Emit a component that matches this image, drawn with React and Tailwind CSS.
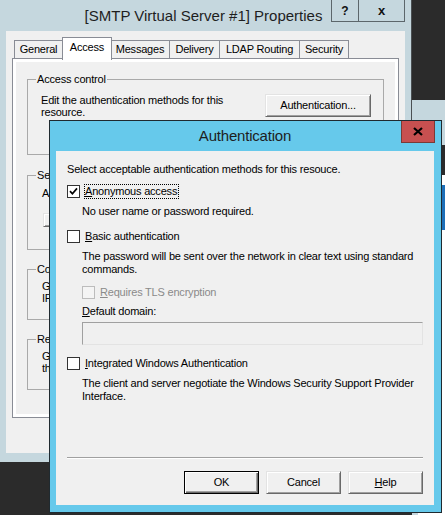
import React from 'react';

const ui = { fontFamily: '"Liberation Sans", Arial, sans-serif' };

const CheckBox = ({ checked, disabled }) => (
  <span
    className={
      disabled
        ? 'flex h-[13px] w-[13px] shrink-0 items-center justify-center border border-[#bcbcbc] bg-[#f4f4f4]'
        : 'flex h-[13px] w-[13px] shrink-0 items-center justify-center border border-[#333333] bg-white'
    }
  >
    {checked ? (
      <svg width="9" height="9" viewBox="0 0 9 9">
        <path d="M1 4.2 L3.4 6.8 L8 1.4" stroke="#000" strokeWidth="1.7" fill="none" />
      </svg>
    ) : null}
  </span>
);

const WinButton = ({ children, isDefault, className = '' }) => (
  <button
    className={
      (isDefault
        ? 'border border-black shadow-[inset_1px_1px_#ffffff,inset_-1px_-1px_#696969,inset_-2px_-2px_#a0a0a0] '
        : 'border border-t-[#e3e3e3] border-l-[#e3e3e3] border-r-[#696969] border-b-[#696969] shadow-[inset_1px_1px_#ffffff,inset_-1px_-1px_#a0a0a0] ') +
      'flex items-center justify-center bg-[#f0f0f0] text-[11px] tracking-[-0.2px] text-black ' +
      className
    }
  >
    {children}
  </button>
);

const tabs = [
  { name: 'General', w: 'w-[49px]' },
  { name: 'Access', w: 'w-[50px]', active: true },
  { name: 'Messages', w: 'w-[60px]' },
  { name: 'Delivery', w: 'w-[51px]' },
  { name: 'LDAP Routing', w: 'w-[81px]' },
  { name: 'Security', w: 'w-[50px]' },
];

const GroupBox = ({ title, className = '', children }) => (
  <fieldset className={'border border-[#a9a9a9] ' + className}>
    <legend className="ml-[8px] px-[1px] text-[11px] leading-[13px]">{title}</legend>
    {children}
  </fieldset>
);

const Key = ({ children }) => <span className="underline underline-offset-1">{children}</span>;

const PropertiesWindow = () => (
  <div className="absolute left-0 top-0 flex h-[462px] w-[412px] flex-col border-r border-[#4a4f52] bg-[#c5d7de]">
    <div className="flex h-[31px] shrink-0 items-start">
      <div className="flex-1 pl-[76px] pt-[6px] text-center text-[15px] leading-[20px] text-[#1e1e1e]">
        [SMTP Virtual Server #1] Properties
      </div>
      <div className="mr-[6px] flex h-[22px] border-x border-b border-[#5c666b]">
        <div className="flex w-[26px] items-center justify-center text-[12px] font-bold text-[#111]">?</div>
        <div className="flex w-[46px] items-center justify-center border-l border-[#5c666b] text-[13px] font-bold text-[#111]">
          x
        </div>
      </div>
    </div>
    <div className="mx-[6px] flex flex-1 flex-col bg-[#f0f0f0] pt-[6px] text-[11px] tracking-[-0.2px] text-black">
      <div className="ml-[8px] flex h-[21px] items-end">
        {tabs.map((t) =>
          t.active ? (
            <div
              key={t.name}
              className={
                t.w +
                ' relative z-10 -mx-px -mb-[2px] flex h-[23px] items-start justify-center border-x border-t border-[#898c95] bg-white pt-[3px] leading-[13px]'
              }
            >
              {t.name}
            </div>
          ) : (
            <div
              key={t.name}
              className={
                t.w +
                ' -ml-px flex h-[18px] items-start justify-center border-x border-t border-[#898c95] bg-[#f0f0f0] pt-[2px] leading-[13px] first:ml-0'
              }
            >
              {t.name}
            </div>
          )
        )}
      </div>
      <div className="mx-[6px] h-[360px] border border-[#898c95] bg-white p-[3px]">
        <div className="flex h-full flex-col bg-[#f0f0f0] px-[11px] pt-[11px]">
          <GroupBox title="Access control" className="h-[82px] w-[357px]">
            <div className="flex items-start pl-[13px] pt-[8px]">
              <div className="w-[224px] leading-[12px]">
                Edit the authentication methods for this resource.
              </div>
              <WinButton className="h-[23px] w-[106px]">Authentication...</WinButton>
            </div>
          </GroupBox>
          <GroupBox title="Secure communication" className="mt-[14px] h-[81px] w-[357px]">
            <div className="pl-[14px] pt-[5px] leading-[12px]">A certificate is not installed on this virtual server.</div>
            <WinButton className="ml-[15px] mt-[14px] h-[14px] w-[90px]">Certificate...</WinButton>
          </GroupBox>
          <GroupBox title="Connection control" className="mt-[13px] h-[57px] w-[357px]">
            <div className="pl-[14px] pt-[4px] leading-[12px]">
              Grant or deny access to this resouce using
              <br />
              IP addresses or Internet domain names.
            </div>
          </GroupBox>
          <GroupBox title="Relay restrictions" className="mt-[13px] h-[57px] w-[357px]">
            <div className="pl-[14px] pt-[4px] leading-[12px]">
              Grant or deny permissions to relay e-mail
              <br />
              through this SMTP virtual server.
            </div>
          </GroupBox>
        </div>
      </div>
    </div>
    <div className="h-[9px] shrink-0" />
  </div>
);

const BackWindow = () => (
  <div className="absolute left-[412px] top-[100px] flex h-[415px] w-[40px] flex-col bg-[#c5d7de]">
    <div className="h-[45px]" />
    <div className="mx-[6px] flex flex-1 flex-col bg-white">
      <div className="h-[30px] bg-[#2b2b2b]" />
      <div className="mt-[10px] h-[45px] bg-[#1c6fb8]" />
    </div>
  </div>
);

const AuthDialog = () => (
  <div className="absolute left-[49px] top-[120px] z-20 flex h-[393px] w-[393px] flex-col border border-[#1f2a30] bg-[#66c9eb] pb-[7px] pl-[6px] pr-[7px]">
    <div className="relative flex h-[30px] shrink-0 items-start justify-center">
      <div className="pt-[6px] text-[15px] leading-[18px] tracking-[-0.2px] text-[#1e1e1e]">Authentication</div>
      <div className="absolute right-[-1px] top-0 flex h-[22px] w-[34px] items-center justify-center border-x border-b border-[#7a3a36] bg-[#c75050]">
        <svg width="10" height="9" viewBox="0 0 10 9">
          <path d="M1 1 L9 8 M9 1 L1 8" stroke="#000" strokeWidth="2.2" />
        </svg>
      </div>
    </div>
    <div className="flex flex-1 flex-col bg-[#f0f0f0] px-[11px] pt-[12px] text-[11px] leading-[13px] tracking-[-0.2px] text-black">
      <p>Select acceptable authentication methods for this resouce.</p>
      <div className="mt-[8px] flex items-center">
        <CheckBox checked />
        <span className="ml-[4px] border border-dotted border-black pr-px">
          <Key>A</Key>nonymous access
        </span>
      </div>
      <p className="ml-[15px] mt-[6px]">No user name or password required.</p>
      <div className="mt-[12px] flex items-center">
        <CheckBox />
        <span className="ml-[5px]">
          <Key>B</Key>asic authentication
        </span>
      </div>
      <p className="ml-[15px] mt-[7px] w-[341px]">
        The password will be sent over the network in clear text using standard commands.
      </p>
      <div className="ml-[15px] mt-[10px] flex items-center text-[#8a8a8a]">
        <CheckBox disabled />
        <span className="ml-[5px]">
          <Key>R</Key>equires TLS encryption
        </span>
      </div>
      <p className="ml-[15px] mt-[6px]">
        <Key>D</Key>efault domain:
      </p>
      <div className="ml-[15px] mt-[4px] h-[23px] w-[341px] border border-[#a0a0a0] border-b-[#e3e3e3] border-r-[#e3e3e3] bg-[#f0f0f0]" />
      <div className="mt-[12px] flex items-center">
        <CheckBox />
        <span className="ml-[5px]">
          <Key>I</Key>ntegrated Windows Authentication
        </span>
      </div>
      <p className="ml-[15px] mt-[7px] w-[341px]">
        The client and server negotiate the Windows Security Support Provider Interface.
      </p>
      <div className="mt-[54px] h-[2px] border-t border-b border-t-[#a0a0a0] border-b-white" />
      <div className="mt-[12px] flex justify-end gap-[7px]">
        <WinButton isDefault className="h-[23px] w-[75px]">OK</WinButton>
        <WinButton className="h-[23px] w-[75px]">Cancel</WinButton>
        <WinButton className="h-[23px] w-[75px]">
          <span>
            <Key>H</Key>elp
          </span>
        </WinButton>
      </div>
    </div>
  </div>
);

export default function App() {
  return (
    <div className="relative h-[515px] w-[445px] overflow-hidden bg-[#2b2b2b]" style={ui}>
      <BackWindow />
      <PropertiesWindow />
      <AuthDialog />
    </div>
  );
}
